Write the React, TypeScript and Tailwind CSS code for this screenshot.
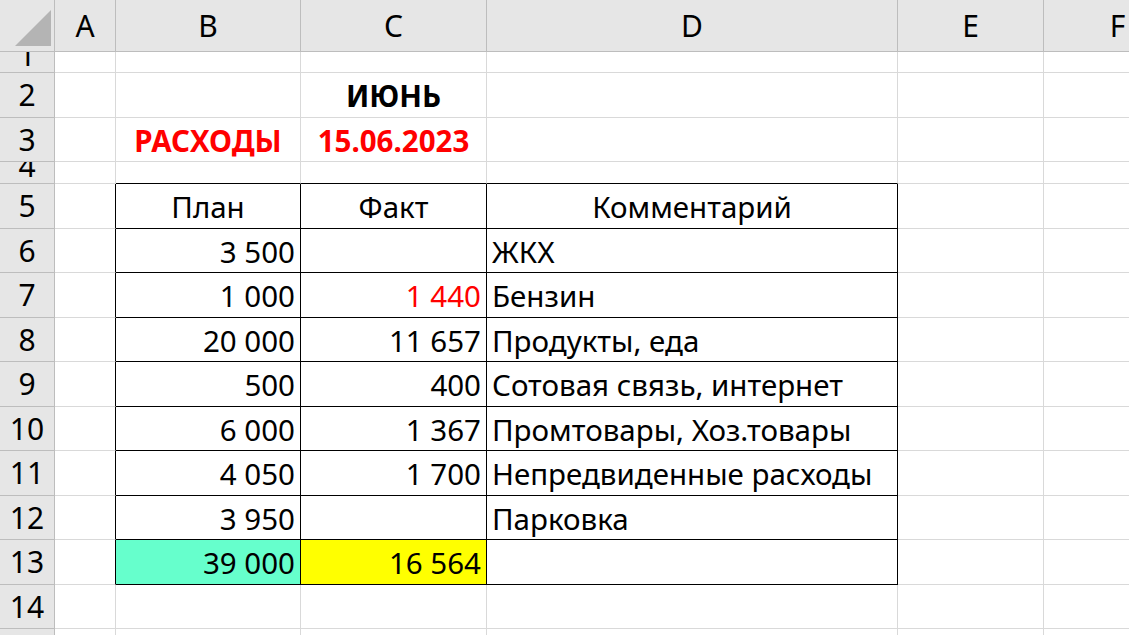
import React from "react";

const cols = ["A", "B", "C", "D", "E", "F"];
const rowH = [21, 45, 44, 22, 45, 44, 45, 44, 45, 44, 45, 44, 45, 44];

type Cell = { t?: string; cls?: string; align?: string; bg?: string };
const data: Record<number, Cell[]> = {
  2: [{}, {}, { t: "ИЮНЬ", cls: "font-bold", align: "justify-center" }, {}, {}, {}],
  3: [{}, { t: "РАСХОДЫ", cls: "font-bold text-[#ff0000]", align: "justify-center" }, { t: "15.06.2023", cls: "font-bold text-[#ff0000]", align: "justify-center" }, {}, {}, {}],
  5: [{}, { t: "План", align: "justify-center" }, { t: "Факт", align: "justify-center" }, { t: "Комментарий", align: "justify-center" }, {}, {}],
  6: [{}, { t: "3 500" }, {}, { t: "ЖКХ", align: "justify-start" }, {}, {}],
  7: [{}, { t: "1 000" }, { t: "1 440", cls: "text-[#ff0000]" }, { t: "Бензин", align: "justify-start" }, {}, {}],
  8: [{}, { t: "20 000" }, { t: "11 657" }, { t: "Продукты, еда", align: "justify-start" }, {}, {}],
  9: [{}, { t: "500" }, { t: "400" }, { t: "Сотовая связь, интернет", align: "justify-start" }, {}, {}],
  10: [{}, { t: "6 000" }, { t: "1 367" }, { t: "Промтовары, Хоз.товары", align: "justify-start" }, {}, {}],
  11: [{}, { t: "4 050" }, { t: "1 700" }, { t: "Непредвиденные расходы", align: "justify-start" }, {}, {}],
  12: [{}, { t: "3 950" }, {}, { t: "Парковка", align: "justify-start" }, {}, {}],
  13: [{}, { t: "39 000", bg: "bg-[#66ffcc]" }, { t: "16 564", bg: "bg-[#ffff00]" }, {}, {}, {}],
};

export default function App() {
  return (
    <div
      className="w-[1129px] h-[635px] overflow-hidden bg-white text-black text-[29.5px] leading-none"
      style={{ fontFamily: '"Noto Sans", "Open Sans", sans-serif' }}
    >
      <div className="grid w-[1192px] grid-cols-[55px_61px_185px_186px_411px_146px_148px] grid-rows-[52px_21px_45px_44px_22px_45px_44px_45px_44px_45px_44px_45px_44px_45px_44px_1fr] h-full">
        <div className="bg-[#e6e6e6] border-r border-b border-[#bdbdbd] relative">
          <svg className="absolute right-[3px] bottom-[5px]" width="36" height="36" viewBox="0 0 36 36">
            <polygon points="36,0 36,36 0,36" fill="#b4b4b4" />
          </svg>
        </div>
        {cols.map((c) => (
          <div key={c} className="bg-[#e6e6e6] border-r border-b border-[#bdbdbd] flex items-center justify-center text-[30px]">
            {c}
          </div>
        ))}
        {rowH.map((_, i) => {
          const r = i + 1;
          const inTable = r >= 5 && r <= 13;
          const small = r === 1 || r === 4;
          return (
            <React.Fragment key={r}>
              <div className={`bg-[#e6e6e6] border-r border-b border-[#bdbdbd] flex justify-center overflow-hidden text-[30px] ${small ? "items-end" : "items-center"}`}>
                <span className={small ? "mb-[2px]" : ""}>{r}</span>
              </div>
              {cols.map((c, ci) => {
                const cell = data[r]?.[ci] ?? {};
                const tcol = ci >= 1 && ci <= 3;
                const rightBlack = inTable && ci >= 0 && ci <= 3;
                const bottomBlack = (r === 4 || inTable) && tcol;
                return (
                  <div
                    key={c}
                    className={`border-r border-b flex items-center whitespace-nowrap px-[5px] pt-[2px] ${cell.bg ?? ""} ${
                      rightBlack ? "border-r-black" : "border-r-[#d9d9d9]"
                    } ${bottomBlack ? "border-b-black" : "border-b-[#d9d9d9]"} ${cell.align ?? "justify-end"} ${cell.cls ?? ""}`}
                  >
                    {cell.t}
                  </div>
                );
              })}
            </React.Fragment>
          );
        })}
        <div className="bg-[#e6e6e6] border-r border-[#bdbdbd]" />
        {cols.map((c) => (
          <div key={c} className="border-r border-[#d9d9d9]" />
        ))}
      </div>
    </div>
  );
}
